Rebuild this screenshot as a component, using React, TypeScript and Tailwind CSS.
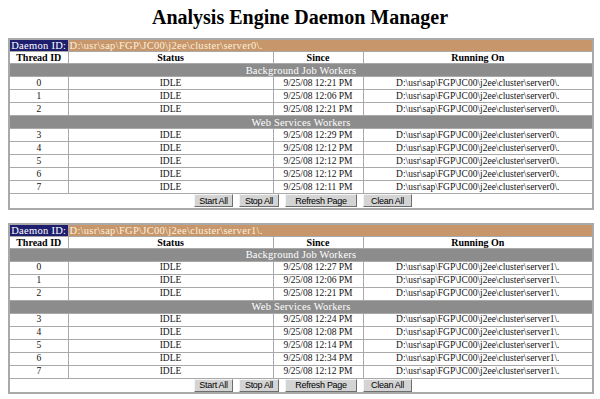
import React from 'react'

type Row = { id: number; since: string }

const SERVERS: { path: string; bg: Row[]; ws: Row[] }[] = [
  {
    path: 'D:\\usr\\sap\\FGP\\JC00\\j2ee\\cluster\\server0\\.',
    bg: [
      { id: 0, since: '9/25/08 12:21 PM' },
      { id: 1, since: '9/25/08 12:06 PM' },
      { id: 2, since: '9/25/08 12:21 PM' },
    ],
    ws: [
      { id: 3, since: '9/25/08 12:29 PM' },
      { id: 4, since: '9/25/08 12:12 PM' },
      { id: 5, since: '9/25/08 12:12 PM' },
      { id: 6, since: '9/25/08 12:12 PM' },
      { id: 7, since: '9/25/08 12:11 PM' },
    ],
  },
  {
    path: 'D:\\usr\\sap\\FGP\\JC00\\j2ee\\cluster\\server1\\.',
    bg: [
      { id: 0, since: '9/25/08 12:27 PM' },
      { id: 1, since: '9/25/08 12:06 PM' },
      { id: 2, since: '9/25/08 12:21 PM' },
    ],
    ws: [
      { id: 3, since: '9/25/08 12:24 PM' },
      { id: 4, since: '9/25/08 12:08 PM' },
      { id: 5, since: '9/25/08 12:14 PM' },
      { id: 6, since: '9/25/08 12:34 PM' },
      { id: 7, since: '9/25/08 12:12 PM' },
    ],
  },
]

const cell = 'border border-[#a9a9a9] h-[13px] p-0 leading-[11px] text-center'

function DataRow({ row, path }: { row: Row; path: string }) {
  return (
    <tr className="bg-white text-[9.5px] text-[#111]">
      <td className={cell}>{row.id}</td>
      <td className={cell}>IDLE</td>
      <td className={cell}>{row.since}</td>
      <td className={cell}>{path}</td>
    </tr>
  )
}

function Section({ label }: { label: string }) {
  return (
    <tr>
      <td
        colSpan={4}
        className="border border-[#a9a9a9] h-[13px] p-0 leading-[11px] text-center bg-[#8c8c8c] text-white text-[10.5px] tracking-[0.2px]"
      >
        {label}
      </td>
    </tr>
  )
}

function Btn({ label, w }: { label: string; w: string }) {
  return (
    <button
      className={`${w} h-[13px] bg-[#d4d4d4] border border-t-[#f4f4f4] border-l-[#f4f4f4] border-r-[#6e6e6e] border-b-[#6e6e6e] text-[9px] leading-[10px] text-black font-['Liberation_Sans',Arial,sans-serif] tracking-[-0.3px]`}
    >
      {label}
    </button>
  )
}

function DaemonTable({ path, bg, ws }: { path: string; bg: Row[]; ws: Row[] }) {
  return (
    <table className="w-[584px] table-fixed border-collapse border-2 border-[#a9a9a9]">
      <colgroup>
        <col className="w-[59px]" />
        <col className="w-[205px]" />
        <col className="w-[90px]" />
        <col className="w-[230px]" />
      </colgroup>
      <tbody>
        <tr className="text-[10.5px] tracking-[0.3px]">
          <td className="border border-[#a9a9a9] h-[12px] p-0 leading-[11px] bg-[#1e1e6e] text-white text-center">
            Daemon ID:
          </td>
          <td colSpan={3} className="border border-[#a9a9a9] h-[12px] p-0 pl-[1px] leading-[11px] bg-[#c7966a] text-[#fdf0dc]">
            {path}
          </td>
        </tr>
        <tr className="bg-white text-[10px] font-bold">
          <th className="border border-[#a9a9a9] h-[12px] p-0 leading-[11px] text-center">Thread ID</th>
          <th className="border border-[#a9a9a9] h-[12px] p-0 leading-[11px] text-center">Status</th>
          <th className="border border-[#a9a9a9] h-[12px] p-0 leading-[11px] text-center">Since</th>
          <th className="border border-[#a9a9a9] h-[12px] p-0 leading-[11px] text-center">Running On</th>
        </tr>
        <Section label="Background Job Workers" />
        {bg.map((r) => (
          <DataRow key={r.id} row={r} path={path} />
        ))}
        <Section label="Web Services Workers" />
        {ws.map((r) => (
          <DataRow key={r.id} row={r} path={path} />
        ))}
        <tr className="bg-white">
          <td colSpan={4} className="border border-[#a9a9a9] h-[15px] p-0">
            <div className="flex justify-center items-center gap-[6px] pl-[4px]">
              <Btn label="Start All" w="w-[39px]" />
              <Btn label="Stop All" w="w-[40px]" />
              <Btn label="Refresh Page" w="w-[72px]" />
              <Btn label="Clean All" w="w-[49px]" />
            </div>
          </td>
        </tr>
      </tbody>
    </table>
  )
}

export default function App() {
  return (
    <div className="w-[600px] h-[399px] bg-white font-['Liberation_Serif','Times_New_Roman',serif] text-black overflow-hidden">
      <h1 className="text-center text-[20px] font-bold leading-[24px] pt-[5px]">Analysis Engine Daemon Manager</h1>
      <div className="flex flex-col gap-[13px] pl-[8px] pt-[9px]">
        {SERVERS.map((s) => (
          <DaemonTable key={s.path} path={s.path} bg={s.bg} ws={s.ws} />
        ))}
      </div>
    </div>
  )
}
